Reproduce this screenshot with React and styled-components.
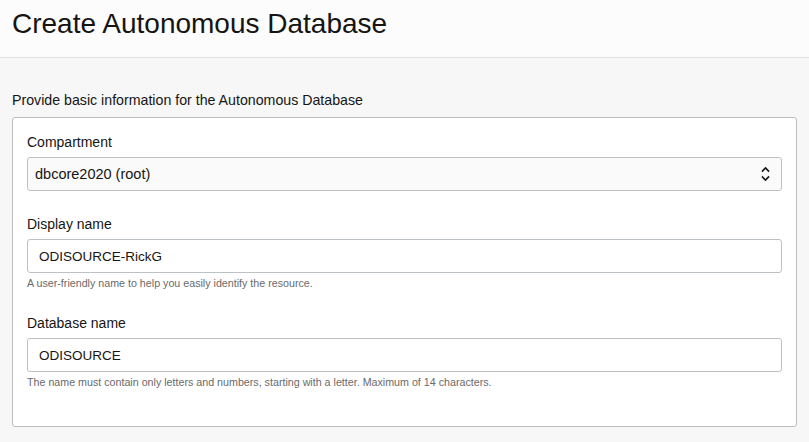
import React from "react";
import styled, { createGlobalStyle } from "styled-components";

const Global = createGlobalStyle`
  html, body { margin: 0; padding: 0; }
  body {
    background: #f7f7f7;
    font-family: "Liberation Sans", Arial, sans-serif;
    color: #161513;
  }
`;

const Page = styled.div`
  width: 809px;
  height: 442px;
  overflow: hidden;
  background: #f7f7f7;
`;

const Header = styled.header`
  height: 57px;
  background: #fcfcfc;
  border-bottom: 1px solid #e2e2e2;
  padding: 0 12px;
  display: flex;
  align-items: flex-start;
`;

const Title = styled.h1`
  margin: 8px 0 0;
  font-size: 28px;
  font-weight: 400;
  line-height: 32px;
  color: #161513;
`;

const Body = styled.main`
  padding: 32px 12px 0;
`;

const Intro = styled.p`
  margin: 0 0 7px;
  font-size: 14.2px;
  line-height: 20px;
`;

const Card = styled.section`
  width: 785px;
  box-sizing: border-box;
  height: 310px;
  background: #fff;
  border: 1px solid #b8bdc2;
  border-radius: 3px;
  padding: 14px 14px 0;
  display: flex;
  flex-direction: column;
  gap: 23px;
`;

const Field = styled.div`
  display: flex;
  flex-direction: column;
`;

const Label = styled.label`
  font-size: 14px;
  line-height: 20px;
  margin-bottom: 5px;
`;

const Box = styled.div`
  height: 34px;
  box-sizing: border-box;
  border: 1px solid #bcc1c6;
  border-radius: 3px;
  background: ${(p) => (p.$select ? "#fafafa" : "#fff")};
  display: flex;
  align-items: center;
  justify-content: space-between;
  padding: ${(p) => (p.$select ? "0 11px 0 7px" : "0 10px 0 11px")};
  font-size: ${(p) => (p.$select ? "14.5px" : "13.5px")};
  color: #161513;
`;

const Help = styled.div`
  font-size: 10.7px;
  line-height: 14px;
  margin-top: 3px;
  color: #6a6a6a;
`;

const Chevrons = () => (
  <svg width="9" height="16" viewBox="0 0 9 16" fill="none" stroke="#161513" strokeWidth="1.6" strokeLinecap="square">
    <path d="M1.5 5 L4.5 2 L7.5 5" />
    <path d="M1.5 11 L4.5 14 L7.5 11" />
  </svg>
);

export default function App() {
  return (
    <Page>
      <Global />
      <Header>
        <Title>Create Autonomous Database</Title>
      </Header>
      <Body>
        <Intro>Provide basic information for the Autonomous Database</Intro>
        <Card>
          <Field>
            <Label>Compartment</Label>
            <Box $select>
              <span>dbcore2020 (root)</span>
              <Chevrons />
            </Box>
          </Field>
          <Field>
            <Label>Display name</Label>
            <Box>ODISOURCE-RickG</Box>
            <Help>A user-friendly name to help you easily identify the resource.</Help>
          </Field>
          <Field>
            <Label>Database name</Label>
            <Box>ODISOURCE</Box>
            <Help>The name must contain only letters and numbers, starting with a letter. Maximum of 14 characters.</Help>
          </Field>
        </Card>
      </Body>
    </Page>
  );
}
